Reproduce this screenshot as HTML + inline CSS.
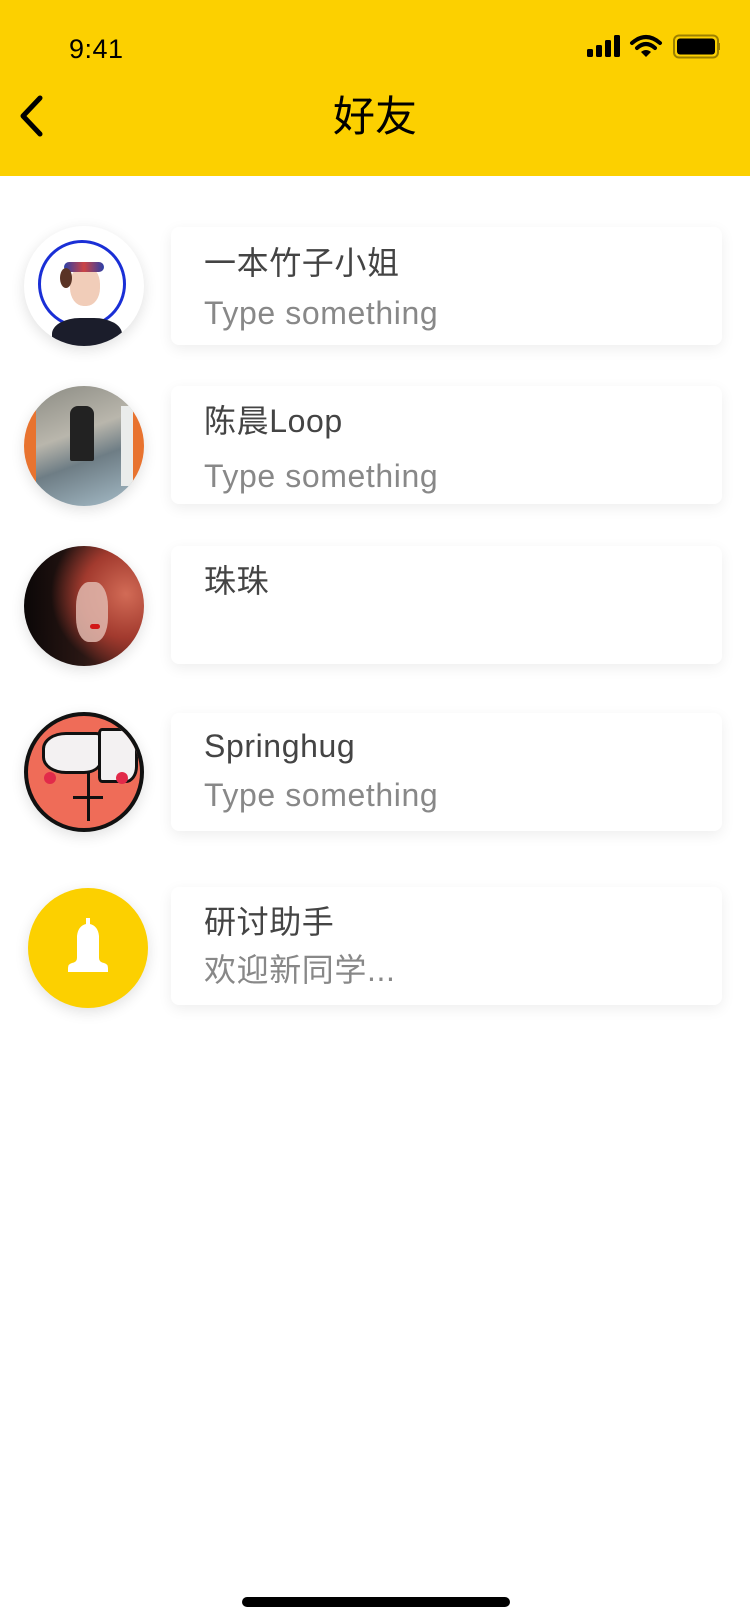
<!DOCTYPE html>
<html><head><meta charset="utf-8">
<style>
*{margin:0;padding:0;box-sizing:border-box}
body{width:750px;height:1624px;background:#fff;position:relative;overflow:hidden;font-family:"Liberation Sans","Noto Sans CJK SC",sans-serif}
.hdr{position:absolute;left:0;top:0;width:750px;height:176px;background:#FCD000}
.time{position:absolute;left:69px;top:34px;font-size:27px;color:#000;letter-spacing:0.5px}
.title{position:absolute;left:0;width:750px;top:90px;text-align:center;font-size:42px;color:#000;line-height:54px}
.card{position:absolute;left:171px;width:551px;height:118px;background:#fff;border-radius:8px;box-shadow:0 4px 14px rgba(0,0,0,0.07)}
.nm{position:absolute;left:33px;font-size:32px;color:#444;line-height:40px;letter-spacing:0.6px}
.sb{position:absolute;left:33px;font-size:32px;color:#888;line-height:40px;letter-spacing:0.6px}
.av{position:absolute;width:120px;height:120px;border-radius:50%;overflow:hidden;box-shadow:0 4px 14px rgba(0,0,0,0.12)}
.home{position:absolute;left:242px;top:1597px;width:268px;height:10px;border-radius:5px;background:#000}
</style></head><body>
<div class="hdr">
<div class="time">9:41</div>
<svg style="position:absolute;left:585px;top:34px" width="135" height="26" viewBox="0 0 135 26">
<rect x="2" y="15" width="6" height="8" rx="1.5"/><rect x="11" y="11" width="6" height="12" rx="1.5"/><rect x="20" y="6" width="6" height="17" rx="1.5"/><rect x="29" y="1" width="6" height="22" rx="1.5"/>
<path d="M47 9 Q61 -3 75 9" stroke="#000" stroke-width="4" fill="none" stroke-linecap="round"/>
<path d="M52 14 Q61 6 70 14" stroke="#000" stroke-width="4" fill="none" stroke-linecap="round"/>
<path d="M56 18 L61 23 L66 18 Q61 14 56 18Z"/>
<rect x="89" y="1.5" width="44" height="22" rx="5" fill="none" stroke="#9c8000" stroke-width="2"/>
<rect x="92" y="4.5" width="38" height="16" rx="3"/>
<rect x="134" y="9" width="2" height="7" fill="#9c8000"/>
</svg>
<svg style="position:absolute;left:16px;top:94px" width="30" height="44" viewBox="0 0 30 44"><path d="M24 4 L7 22 L24 40" stroke="#000" stroke-width="5" fill="none" stroke-linecap="round" stroke-linejoin="round"/></svg>
<div class="title">好友</div>
</div>

<div class="av" style="left:24px;top:226px;background:#fff">
<div style="position:absolute;left:14px;top:14px;width:88px;height:88px;border:3px solid #1a2fd6;border-radius:50%"></div>
<div style="position:absolute;left:46px;top:40px;width:30px;height:40px;border-radius:45%;background:#f1cdb9"></div>
<div style="position:absolute;left:40px;top:36px;width:40px;height:10px;border-radius:5px;background:linear-gradient(90deg,#2b3fa8,#c44,#2b3fa8)"></div>
<div style="position:absolute;left:36px;top:42px;width:12px;height:20px;border-radius:50%;background:#5a3426"></div>
<div style="position:absolute;left:28px;top:92px;width:70px;height:40px;border-radius:40% 40% 0 0;background:#1b1d2b"></div>
</div>
<div class="card" style="top:227px"><div class="nm" style="top:16px">一本竹子小姐</div><div class="sb" style="top:66px">Type something</div></div>

<div class="av" style="left:24px;top:386px;background:linear-gradient(90deg,#e8732f 0 10%,transparent 10% 90%,#e8732f 90%),linear-gradient(160deg,#8a8a82 0%,#b9b6ac 40%,#6e7d85 60%,#a9c0cc 100%)">
<div style="position:absolute;left:46px;top:20px;width:24px;height:55px;background:#222;border-radius:8px 8px 2px 2px"></div>
<div style="position:absolute;left:97px;top:20px;width:12px;height:80px;background:#eaeceb"></div>
</div>
<div class="card" style="top:386px"><div class="nm" style="top:15px">陈晨Loop</div><div class="sb" style="top:70px">Type something</div></div>

<div class="av" style="left:24px;top:546px;background:radial-gradient(circle at 85% 40%,#d26b56 0,#a23a2e 35%,transparent 60%),linear-gradient(90deg,#0b0707 0,#2a1714 50%,#7a2a22 100%)">
<div style="position:absolute;left:52px;top:36px;width:32px;height:60px;border-radius:40%;background:#e1b9ae;opacity:.85"></div>
<div style="position:absolute;left:66px;top:78px;width:10px;height:5px;border-radius:3px;background:#d21818"></div>
</div>
<div class="card" style="top:546px"><div class="nm" style="top:15px">珠珠</div></div>

<div class="av" style="left:24px;top:712px;background:#ef6c58;border:4px solid #111">
<div style="position:absolute;left:14px;top:16px;width:60px;height:42px;background:#f3f1f2;border:3px solid #111;border-radius:40% 10% 30% 40%"></div>
<div style="position:absolute;left:70px;top:12px;width:40px;height:55px;background:#f3f1f2;border:3px solid #111;border-radius:10% 40% 30% 10%"></div>
<div style="position:absolute;left:16px;top:56px;width:12px;height:12px;border-radius:50%;background:#e22a4a"></div>
<div style="position:absolute;left:88px;top:56px;width:12px;height:12px;border-radius:50%;background:#e22a4a"></div>
<div style="position:absolute;left:59px;top:55px;width:3px;height:50px;background:#111"></div>
<div style="position:absolute;left:45px;top:80px;width:30px;height:3px;background:#111"></div>
</div>
<div class="card" style="top:713px"><div class="nm" style="top:13px">Springhug</div><div class="sb" style="top:62px">Type something</div></div>

<div class="av" style="left:28px;top:888px;background:#FCD000">
<svg style="position:absolute;left:34px;top:28px" width="52" height="60" viewBox="0 0 52 60"><path d="M24 2 h4 v6 q8 2 9 12 v22 q0 4 5 5 q4 1 4 5 v4 h-40 v-4 q0-4 4-5 q5-1 5-5 v-22 q1-10 9-12Z" fill="#fff"/></svg>
</div>
<div class="card" style="top:887px"><div class="nm" style="top:15px">研讨助手</div><div class="sb" style="top:63px">欢迎新同学...</div></div>

<div class="home"></div>
</body></html>
